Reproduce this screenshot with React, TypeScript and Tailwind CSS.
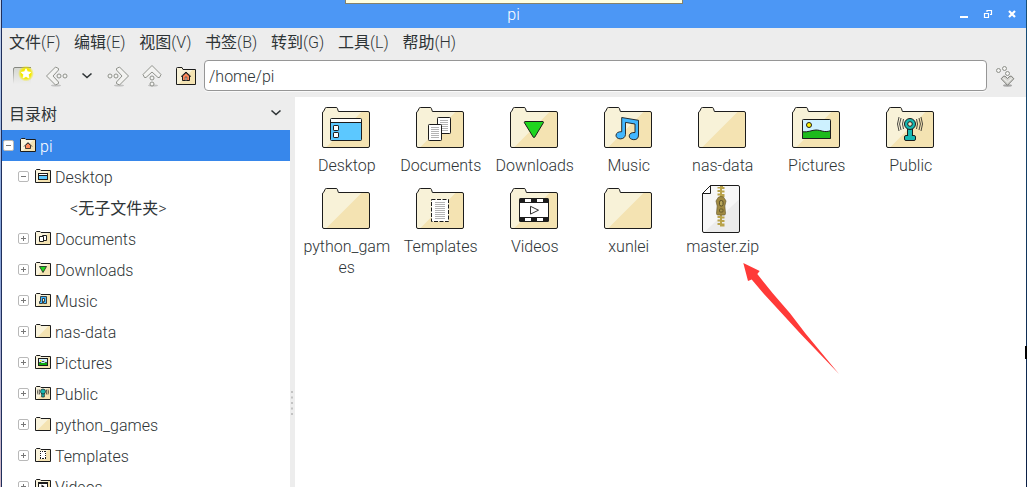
import type { ReactNode } from "react";

const INK = "#1c1c1c";

function BigFolder({ children }: { children?: ReactNode }) {
  return (
    <svg width="48" height="48" viewBox="0 0 48 48" className="shrink-0">
      <path d="M.5 9 Q.5 7.6 1.6 7.4 L3 4.6 Q3.2 3.5 4.4 3.5 H14.2 Q15.2 3.5 15.4 4.4 L16.4 7.5 H46 Q47.5 7.5 47.5 9 V42 Q47.5 43.5 46 43.5 H2 Q.5 43.5 .5 42 Z" fill="#f8f2d8" />
      <path d="M4 43.5 L40 7.5 H46 Q47.5 7.5 47.5 9 V42 Q47.5 43.5 46 43.5 Z" fill="#f4e3b2" />
      <path d="M.5 9 Q.5 7.6 1.6 7.4 L3 4.6 Q3.2 3.5 4.4 3.5 H14.2 Q15.2 3.5 15.4 4.4 L16.4 7.5 H46 Q47.5 7.5 47.5 9 V42 Q47.5 43.5 46 43.5 H2 Q.5 43.5 .5 42 Z" fill="none" stroke={INK} />
      {children}
    </svg>
  );
}

function TextLines({ x, y, w, n }: { x: number; y: number; w: number; n: number }) {
  return (
    <g stroke="#b4b4b4">
      {Array.from({ length: n }, (_, i) => (
        <path key={i} d={`M${x} ${y + i * 2}h${w}`} />
      ))}
    </g>
  );
}

const bigArt: Record<string, ReactNode> = {
  Desktop: (
    <g stroke={INK}>
      <rect x="8.5" y="14.5" width="31" height="22" rx="1" fill="#5cc8ff" />
      <path d="M9 15h30v3.5H9z" fill="#fff" stroke="none" />
      <path d="M8.5 18.5h31" />
      <rect x="11.5" y="21.500" width="5" height="5" rx=".6" fill="#fff" />
      <rect x="11.5" y="28.500" width="5" height="5" rx=".6" fill="#fff" />
    </g>
  ),
  Documents: (
    <g>
      <rect x="21.500" y="13.500" width="13" height="16" rx=".8" fill="#fff" stroke={INK} />
      <TextLines x={24} y={16.5} w={8} n={6} />
      <rect x="12.500" y="20.500" width="13" height="16" rx=".8" fill="#fff" stroke={INK} />
      <TextLines x={15} y={23.5} w={8} n={6} />
    </g>
  ),
  Downloads: <path d="M14.800 17.500 H33 Q33.800 17.800 33.400 18.700 L24.700 33.200 Q24 34 23.300 33.200 L14.400 18.700 Q14 17.800 14.800 17.500Z" fill="#1fd51f" stroke={INK} />,
  Music: (
    <path d="M17.700 13.500 L34.500 16.300 V31 Q34.500 35.700 29.800 35.700 Q25.200 35.300 25.200 31.800 Q25.800 28.200 31 28.500 V20 L21.500 18.400 V30.500 Q21 34.700 16.300 34.900 Q12 34.500 12 31.200 Q12.600 27.500 17.700 27.700 Z" fill="#42b7ff" stroke={INK} strokeWidth=".9" strokeLinejoin="round" />
  ),
  Pictures: (
    <g>
      <rect x="10.500" y="15.500" width="28" height="19" rx=".8" fill="#cdf1ff" />
      <path d="M10.500 27.800 C16 28.500 20 26 24 26 C29 26 32 29 38.500 26.700 V34.500 H10.500Z" fill="#1dbb1d" stroke={INK} />
      <circle cx="17" cy="21" r="2.500" fill="#fff200" stroke={INK} />
      <rect x="10.500" y="15.500" width="28" height="19" rx=".8" fill="none" stroke={INK} />
    </g>
  ),
  Public: (
    <g stroke={INK} fill="#16b8b3">
      <rect x="21.500" y="24" width="5" height="9" />
      <rect x="18.500" y="31.500" width="11" height="5" rx="1.500" />
      <path d="M22.100 31h3.800v2h-3.800z" stroke="none" />
      <circle cx="24" cy="20" r="5.500" />
      <circle cx="24" cy="20" r="2.300" fill="#f5ecc8" />
      <path fill="none" d="M17.500 15q-2 5 0 10M15 14q-2.800 6 0 12M13 13q-3 7 0 14M30.500 15q2 5 0 10M33 14q2.800 6 0 12M35 13q3 7 0 14" strokeWidth=".8" />
    </g>
  ),
  Templates: (
    <g>
      <rect x="15.500" y="14.500" width="17" height="22" fill="#fff" stroke={INK} strokeDasharray="4 1.500" />
      <TextLines x={19} y={17.5} w={10} n={9} />
    </g>
  ),
  Videos: (
    <g>
      <rect x="9" y="13" width="30" height="24" rx="1.500" fill={INK} />
      <path d="M10 18h28v14H10zM15 14h6v3h-6zM27 14h6v3h-6zM15 33h6v3h-6zM27 33h6v3h-6z" fill="#fff" />
      <path d="M20.500 21.300v7.800l8-3.900z" fill="#fff" stroke={INK} strokeWidth=".9" />
    </g>
  ),
};

function ZipIcon() {
  return (
    <svg width="48" height="48" viewBox="0 0 48 48" className="shrink-0">
      <path d="M12.500 .5H40Q41.500 .5 41.500 2V46Q41.500 47.500 40 47.500H6Q4.500 47.500 4.500 46V8.500Z" fill="#f7f7f7" />
      <path d="M6 47.500 41.500 14V46Q41.500 47.500 40 47.500Z" fill="#ececec" />
      <path d="M12.500 .5H40Q41.500 .5 41.500 2V46Q41.500 47.500 40 47.500H6Q4.500 47.500 4.500 46V8.500Z" fill="none" stroke={INK} />
      <path d="M12.500 .5V8.500H4.500Z" fill="#fff" stroke={INK} />
      <path d="M22 1h3v1h1.500v2H24v1.500h2.500v2H24V9h2.500v3H22V10.500h-2.500v-2H22V7h-2.500V5H22V3.500h-2.500V2H22zM22 30h2v1.500h2.500v2H24V35h2.500v2H24v1.500h2.500V41.500H22V40h-2.500v-2H22v-1.500h-2.500v-2H22V33h-2.500v-2H22z" fill="#b9a34b" />
      <path d="M19.500 13.500Q20 11.500 23 11.500T26.500 13.500L28 16 26.800 21 27.500 28.500Q27.500 30 26 30H20Q18.500 30 18.500 28.500L19.200 21 18 16Z" fill="#a08a42" stroke="#6b5d2f" strokeWidth=".7" />
      <rect x="21.500" y="15.500" width="3.500" height="5.500" rx="1.600" fill="#b9a85e" stroke="#4f4523" strokeWidth=".9" />
      <rect x="21.500" y="24" width="3.500" height="3" rx=".8" fill="#a8954b" stroke="#4f4523" strokeWidth=".7" />
    </svg>
  );
}

function SmallFolder({ children }: { children?: ReactNode }) {
  return (
    <svg width="16" height="16" viewBox="0 0 16 16" className="-mt-px shrink-0">
      <path d="M.5 2.500L1.500 1.500H5L6 2.500H15.500V14.500H.5Z" fill="#f9f3dc" />
      <path d="M2 14.500 13.500 3H15.500V14.500Z" fill="#f4e3b2" />
      <path d="M.5 2.500L1.500 1.500H5L6 2.500H15.500V14.500H.5Z" fill="none" stroke={INK} strokeLinejoin="round" />
      {children}
    </svg>
  );
}

const smallArt: Record<string, ReactNode> = {
  pi: (
    <g>
      <path d="M4 9.500L8 5.500L12 9.500" fill="none" stroke={INK} strokeWidth=".8" />
      <path d="M5.500 8.500L8 6L10.500 8.500V11.500H5.500Z" fill="#ff8a5c" stroke={INK} strokeWidth=".8" />
    </g>
  ),
  Desktop: (
    <g>
      <rect x="3.500" y="5.500" width="9" height="6" fill="#5cc8ff" stroke={INK} />
      <path d="M4 6h8v1H4z" fill="#fff" />
      <path d="M4 7.500h8" stroke={INK} />
    </g>
  ),
  Documents: (
    <g fill="#fff" stroke={INK}>
      <path d="M7.500 5.500h4v5h-4z" />
      <path d="M4.500 6.500h4v5h-4z" />
    </g>
  ),
  Downloads: <path d="M4.500 5.500h7L8 11.500z" fill="#1fd51f" stroke={INK} strokeWidth=".8" />,
  Music: <path d="M5.500 4.500h6v7h-3v-2h1v-3h-2v5h-3v-2h1z" fill="#42b7ff" stroke={INK} strokeWidth=".8" />,
  Pictures: (
    <g>
      <rect x="3.500" y="4.500" width="9" height="7" fill="#cdf1ff" stroke={INK} />
      <path d="M4 9h8v2H4z" fill="#0fae0f" />
      <path d="M4 8.500h2l1-1h2l1 1h2" fill="none" stroke={INK} strokeWidth=".7" />
      <path d="M5 6h1.500v1.500H5z" fill="#fff200" />
    </g>
  ),
  Public: (
    <g stroke={INK} strokeWidth=".7">
      <path d="M6.700 8h2.600v4H6.700z" fill="#16b8b3" />
      <circle cx="8" cy="6.500" r="2.500" fill="#16b8b3" />
      <path d="M4.700 4.500q-1 2.500 0 5M3 4.500q-1 2.500 0 5M11.300 4.500q1 2.500 0 5M13 4.500q1 2.500 0 5" fill="none" />
    </g>
  ),
  Templates: (
    <g>
      <path d="M5 4h6v8H5z" fill="#fff" />
      <path d="M5 4h1v1H5zM7 4h1v1H7zM9 4h2v1H9zM5 6h1v1H5zM5 8h1v1H5zM5 10h1v2H5zM10 6h1v1h-1zM10 8h1v1h-1zM10 10h1v2h-1zM7 11h2v1H7z" fill={INK} />
    </g>
  ),
  Videos: (
    <g>
      <rect x="3" y="4" width="10" height="9" fill={INK} />
      <path d="M4 6h8v5H4z" fill="#fff" />
      <path d="M6.500 6.500v4l3-2z" fill={INK} />
    </g>
  ),
};

function Expander({ open }: { open: boolean }) {
  return (
    <svg width="11" height="11" viewBox="0 0 11 11" className="-mt-px shrink-0">
      <rect x=".5" y=".5" width="10" height="10" rx="1.500" fill="#fff" stroke="#b9b9b9" />
      <path d={open ? "M3 5.500h5" : "M3 5.500h5M5.500 3v5"} stroke="#777" />
    </svg>
  );
}

function Chevron() {
  return (
    <svg width="14" height="8" viewBox="0 0 14 8" className="shrink-0">
      <path d="M2.500 1.500L7 5.500L11.500 1.500" fill="none" stroke="#2e3436" strokeWidth="1.600" />
    </svg>
  );
}

/* Pointed arrow with two trailing beads; drawn facing left and rotated for the other directions. */
function BeadArrow({ turn }: { turn: "left" | "right" | "up" }) {
  const transform = { left: undefined, right: "rotate(180 12 12)", up: "rotate(90 12 12)" }[turn];
  return (
    <svg width="24" height="24" viewBox="0 0 24 24" className="shrink-0">
      <ellipse cx={turn === "left" ? 11 : 13} cy="21.500" rx="5" ry="1" fill="#000" opacity=".18" />
      <g transform={transform} stroke="#858780" strokeWidth=".9" fill="#f3f3f1" strokeLinejoin="round">
        <path d="M1.500 12L10.500 3L13.500 4.500V6L8 12L13.500 18V19.500L10.500 21Z" />
        <circle cx="14" cy="12" r="2" />
        <circle cx="20" cy="12" r="2" />
      </g>
    </svg>
  );
}

function NewTabIcon() {
  return (
    <svg width="24" height="24" viewBox="0 0 24 24" className="shrink-0">
      <defs>
        <linearGradient id="tabFill" x1="0" y1="0" x2="0" y2="1">
          <stop offset="0" stopColor="#d6d8d2" />
          <stop offset="1" stopColor="#ededed" />
        </linearGradient>
        <linearGradient id="tabEdge" x1="0" y1="0" x2="0" y2="1">
          <stop offset="0" stopColor="#858780" />
          <stop offset="1" stopColor="#ededed" />
        </linearGradient>
        <radialGradient id="starGlow">
          <stop offset=".6" stopColor="#f5ea00" />
          <stop offset="1" stopColor="#f5ea00" stopOpacity="0" />
        </radialGradient>
      </defs>
      <path d="M1.500 20V5Q1.500 3.500 3 3.500H19V20Z" fill="url(#tabFill)" />
      <path d="M1.500 20V5Q1.500 3.500 3 3.500H19" fill="none" stroke="url(#tabEdge)" />
      <circle cx="14" cy="9.500" r="8" fill="url(#starGlow)" />
      <path d="M14 4.800l1.500 3 3.300.5-2.400 2.300.5 3.300-2.900-1.500-2.900 1.500.5-3.300-2.400-2.300 3.300-.5z" fill="#fff" stroke="#fff" strokeWidth=".8" strokeLinejoin="round" />
    </svg>
  );
}

function HomeIcon() {
  return (
    <svg width="24" height="24" viewBox="0 0 24 24" className="shrink-0">
      <path d="M2.500 4.500Q2.500 3.500 3.500 3.500H8L9 5.500H21.500V20.500H2.500Z" fill="#f8f2d8" />
      <path d="M4 20.500L19 5.500H21.500V20.500Z" fill="#f4e3b2" />
      <path d="M2.500 4.500Q2.500 3.500 3.500 3.500H8L9 5.500H21.500V20.500H2.500Z" fill="none" stroke={INK} />
      <path d="M8.500 12V16.500H15.500V12L12 8.700Z" fill="#ff8a5c" stroke={INK} />
      <path d="M7 12.700L12 8L17 12.700" fill="none" stroke={INK} />
      <path d="M11.200 13h1.600v3.500h-1.600z" fill="#fff" stroke={INK} strokeWidth=".6" />
    </svg>
  );
}

function GoIcon() {
  return (
    <svg width="24" height="24" viewBox="0 0 24 24" className="shrink-0">
      <ellipse cx="13.500" cy="21.500" rx="4.500" ry="1.200" opacity=".3" />
      <g fill="#f3f3f1" stroke="#858780" strokeWidth=".9">
        <circle cx="4.500" cy="6.500" r="2" />
        <circle cx="10.500" cy="4.500" r="2" />
        <circle cx="13.500" cy="9.500" r="2" />
        <path d="M7.200 14.800L9.500 12.200H11L13.500 14.500L16 12.200H17.500L19.800 14.800L13.500 21.300Z" fill="#d6d6d2" stroke="#6f716b" strokeLinejoin="round" />
        <path d="M9.500 14.500l4 3.500l4-3.500" fill="none" stroke="#f5f5f3" />
      </g>
    </svg>
  );
}

const menus = [
  ["文件", "(F)"],
  ["编辑", "(E)"],
  ["视图", "(V)"],
  ["书签", "(B)"],
  ["转到", "(G)"],
  ["工具", "(L)"],
  ["帮助", "(H)"],
];
const places = ["Desktop", "Documents", "Downloads", "Music", "nas-data", "Pictures", "Public", "python_games", "Templates", "Videos"];
const files = [...places, "xunlei", "master.zip"];

export default function App() {
  return (
    <div className="relative flex h-[487px] w-[1027px] overflow-hidden bg-[#ededed] font-['Roboto','Noto_Sans_CJK_SC',sans-serif] text-[16px] leading-[21px] font-light text-[#2e3436]">
      <div className="w-px bg-gradient-to-b from-[#c9d7ee] via-[#7f9fd8] to-[#d3b7c4]" />
      <div className="w-px bg-[#1f2f5c]" />
      <div className="flex w-[1024px] flex-col">
        <header className="flex h-7 shrink-0 items-center bg-[#4c97f5] text-white">
          <div className="w-[92px]" />
          <div className="flex-1 pr-px text-center">pi</div>
          <div className="flex w-[92px] items-center">
            <svg width="92" height="28" viewBox="0 0 92 28" fill="none" stroke="#fff">
              <path d="M26 17h8" strokeWidth="2" />
              <path d="M50.500 13.500h4v4h-4zM53 12v-1.500h4.500v4H56" strokeWidth="1.200" />
              <path d="M75 11l6 6M81 11l-6 6" strokeWidth="2.200" />
            </svg>
          </div>
        </header>

        <nav className="flex h-7 shrink-0 items-center gap-[13.700px] pl-[7px]">
          {menus.map(([label, key]) => (
            <span key={label} className="whitespace-nowrap">
              <span className="font-normal">{label}</span>
              {key}
            </span>
          ))}
        </nav>

        <div className="flex h-10 shrink-0 items-center">
          <div className="flex items-center pl-[10px]">
            <NewTabIcon />
            <div className="ml-[9px] flex"><BeadArrow turn="left" /></div>
            <div className="ml-[11px] flex"><Chevron /></div>
            <div className="ml-3 flex"><BeadArrow turn="right" /></div>
            <div className="ml-2.5 flex"><BeadArrow turn="up" /></div>
            <div className="ml-2.5 flex"><HomeIcon /></div>
          </div>
          <div className="mb-px ml-1.5 flex h-[31px] w-[783px] items-center rounded border border-[#969696] bg-white pt-0.5 pl-1 shadow-[0_1px_0_#fafafa]">
            /home/pi
          </div>
          <div className="ml-[7px] flex"><GoIcon /></div>
        </div>

        <div className="flex min-h-0 flex-1">
          <aside className="flex w-[288px] shrink-0 flex-col">
            <div className="flex h-[34px] shrink-0 items-center justify-between pr-[7px] pl-[7px] font-normal">
              <span className="pt-0.5">目录树</span>
              <Chevron />
            </div>
            <div className="flex-1 overflow-hidden bg-white">
              <div className="flex h-[31px] items-center bg-[#3787eb] pl-px text-white">
                <Expander open />
                <div className="mr-1 ml-1.5 flex"><SmallFolder>{smallArt.pi}</SmallFolder></div>
                <span className="pt-0.5">pi</span>
              </div>
              {places.map((p) => (
                <div key={p}>
                  <div className="flex h-[31px] items-center pl-4">
                    <Expander open={p === "Desktop"} />
                    <div className="mr-1 ml-1.5 flex"><SmallFolder>{smallArt[p]}</SmallFolder></div>
                    <span className="pt-0.5">{p}</span>
                  </div>
                  {p === "Desktop" && (
                    <div className="flex h-[31px] items-center pt-0.5 pl-[68px]">
                      &lt;<span className="font-normal">无子文件夹</span>&gt;
                    </div>
                  )}
                </div>
              ))}
            </div>
          </aside>
          <div className="flex w-[5px] shrink-0 flex-col items-center pt-[295px]">
            <svg width="5" height="26" viewBox="0 0 5 26" fill="#c3c3c3">
              <path d="M1 0h2v2H1zM1 5.500h2v2H1zM1 11h2v2H1zM1 16.500h2v2H1zM1 22h2v2H1z" />
            </svg>
          </div>
          <main className="mt-px grid flex-1 grid-cols-[repeat(7,94px)] content-start overflow-hidden bg-white pt-[7px] pl-1">
            {files.map((f) => (
              <div key={f} className="flex h-[81px] flex-col items-center">
                {f === "master.zip" ? <ZipIcon /> : <BigFolder>{bigArt[f]}</BigFolder>}
                <span className="mt-[3px] max-w-[91px] pl-[1.500px] text-center break-all">{f}</span>
              </div>
            ))}
          </main>
        </div>
      </div>
      <div className="w-px bg-gradient-to-b from-[#17507a] to-[#0b1f45]" />

      <div className="absolute top-0 left-[345px] h-1 w-[338px] border border-t-0 border-[#85826a] bg-[#ffffe1]" />
      <div className="absolute top-[346px] left-[1025px] h-[13px] w-0.5 bg-black" />
      <svg className="absolute top-[262px] left-[742px]" width="98" height="113" viewBox="0 0 98 113">
        <path d="M1.300 1L17.700 9L15.300 12L30.700 31.300L48 51.300L63.300 71.300L97 112L58 71.300L39.700 51.300L21.300 31.300L9.700 17.500L6 19Z" fill="#ff3a38" />
      </svg>
    </div>
  );
}
